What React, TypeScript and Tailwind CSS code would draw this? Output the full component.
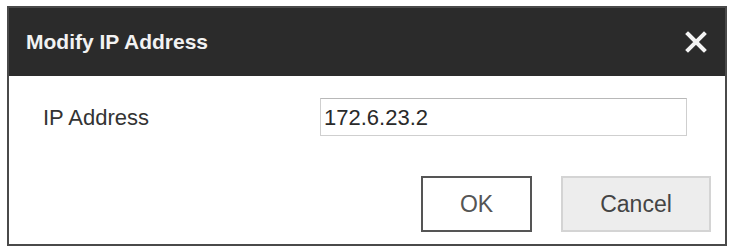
import React from "react";

const font = { fontFamily: '"Liberation Sans", Arial, sans-serif' };

function CloseIcon() {
  return (
    <svg width="22" height="22" viewBox="0 0 22 22" aria-hidden="true">
      <path d="M3 3 L19 19 M19 3 L3 19" stroke="#f4f4f4" strokeWidth="4" strokeLinecap="square" />
    </svg>
  );
}

export default function App() {
  return (
    <div className="h-[248px] w-[729px] bg-white pl-[7px] pt-[6px]" style={font}>
      <div className="flex h-[240px] w-[720px] flex-col border-2 border-[#4a4a4a] bg-white">
        {/* title bar */}
        <div className="flex h-[68px] items-center justify-between bg-[#2b2b2b] pl-[17px] pr-[18px]">
          <span className="text-[21px] font-bold text-[#f2f2f2]">Modify IP Address</span>
          <CloseIcon />
        </div>

        <div className="flex flex-1 flex-col pl-[34px] pr-[14px]">
          <div className="mt-[22px] flex items-center">
            <label className="w-[277px] text-[22px] text-[#333]">IP Address</label>
            <div className="flex h-[38px] w-[367px] items-center border border-[#cfcfcf] border-t-[#b8b8b8] px-[3px] text-[22px] text-[#2a2a2a]">
              172.6.23.2
            </div>
          </div>

          <div className="mt-[40px] flex justify-end gap-[29px]">
            <button className="h-[56px] w-[111px] border-2 border-[#555] bg-white text-[23px] text-[#555]">OK</button>
            <button className="h-[56px] w-[150px] border-2 border-[#d4d4d4] bg-[#ededed] text-[23px] text-[#444]">Cancel</button>
          </div>
        </div>
      </div>
    </div>
  );
}
